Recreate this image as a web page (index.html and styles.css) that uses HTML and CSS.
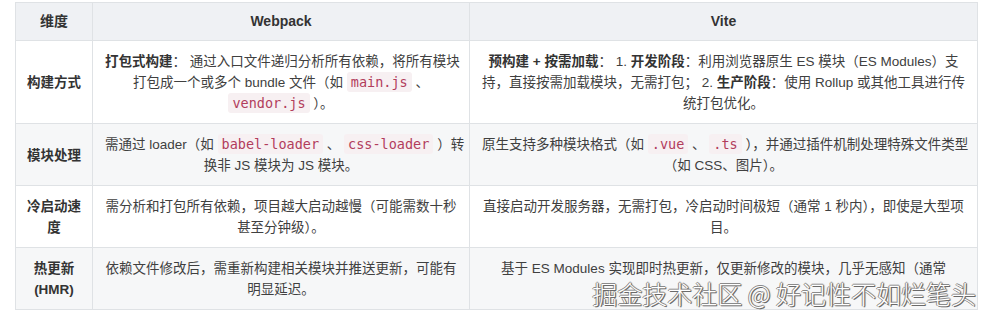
FILE: index.html
```html
<!DOCTYPE html>
<html lang="zh-CN">
<head>
<meta charset="utf-8">
<title>Webpack vs Vite</title>
<link rel="stylesheet" href="styles.css">
</head>
<body>
<div class="wrap">
  <table class="cmp">
    <colgroup>
      <col class="c1">
      <col class="c2">
      <col class="c3">
    </colgroup>
    <thead>
      <tr><th>维度</th><th>Webpack</th><th>Vite</th></tr>
    </thead>
    <tbody>
      <tr>
        <td class="label">构建方式</td>
        <td><strong>打包式构建</strong>： 通过入口文件递归分析所有依赖，将所有模块<br>打包成一个或多个 bundle 文件（如 <code>main.js</code> 、<br><code>vendor.js</code> ）。</td>
        <td><strong>预构建 + 按需加载</strong>： 1. <strong>开发阶段</strong>：利用浏览器原生 ES 模块（ES Modules）支<br>持，直接按需加载模块，无需打包； 2. <strong>生产阶段</strong>：使用 Rollup 或其他工具进行传<br>统打包优化。</td>
      </tr>
      <tr>
        <td class="label">模块处理</td>
        <td>需通过 loader（如 <code>babel-loader</code> 、 <code>css-loader</code> ）转<br>换非 JS 模块为 JS 模块。</td>
        <td>原生支持多种模块格式（如 <code>.vue</code> 、 <code>.ts</code> ），并通过插件机制处理特殊文件类型<br>（如 CSS、图片）。</td>
      </tr>
      <tr>
        <td class="label">冷启动速<br>度</td>
        <td>需分析和打包所有依赖，项目越大启动越慢（可能需数十秒<br>甚至分钟级）。</td>
        <td>直接启动开发服务器，无需打包，冷启动时间极短（通常 1 秒内），即使是大型项<br>目。</td>
      </tr>
      <tr>
        <td class="label">热更新<br>(HMR)</td>
        <td>依赖文件修改后，需重新构建相关模块并推送更新，可能有<br>明显延迟。</td>
        <td class="last">基于 ES Modules 实现即时热更新，仅更新修改的模块，几乎无感知（通常</td>
      </tr>
    </tbody>
  </table>
  <div class="watermark">掘金技术社区 @ 好记性不如烂笔头</div>
</div>
</body>
</html>
```

FILE: styles.css
```css
html, body {
  margin: 0;
  padding: 0;
  background: #ffffff;
}

body {
  font-family: "Liberation Sans", "Noto Sans CJK SC", sans-serif;
  font-size: 13.5px;
  color: #404040;
}

.wrap {
  position: relative;
  width: 962px;
  margin: 2px 0 0 15px;
}

.cmp {
  border-collapse: collapse;
  table-layout: fixed;
  width: 962px;
}

.c1 { width: 77px; }
.c2 { width: 377px; }
.c3 { width: 508px; }

.cmp th,
.cmp td {
  border: 1px solid #dfe2e5;
  text-align: center;
  vertical-align: middle;
  white-space: nowrap;
  line-height: 21px;
}

.cmp th {
  background: #eff1f4;
  padding: 8px 12px;
  font-size: 14px;
  font-weight: 700;
  color: #333333;
}

.cmp td {
  padding: 10px 12px 9px;
}

.cmp td.last {
  vertical-align: top;
}

.cmp tbody tr:nth-child(even) td {
  background: #f6f7f8;
}

.cmp td.label {
  font-weight: 700;
  color: #333333;
  padding-left: 8px;
  padding-right: 8px;
}

strong {
  font-weight: 700;
  color: #333333;
}

code {
  font-family: "DejaVu Sans Mono", "Liberation Mono", monospace;
  font-size: 13.5px;
  color: #b23d5c;
  background: #f7f0f2;
  padding: 2px 4px;
  border-radius: 3px;
}

.watermark {
  position: absolute;
  right: 1px;
  top: 279px;
  font-family: "Noto Sans CJK SC", sans-serif;
  font-weight: 300;
  font-size: 25px;
  line-height: 24px;
  color: #ffffff;
  white-space: nowrap;
  text-shadow: 1px 1px 0 #6a6a6a, -1px 0 0 #8a8a8a, 0 -1px 0 #8a8a8a, 1px 0 1px #555555;
}
```
